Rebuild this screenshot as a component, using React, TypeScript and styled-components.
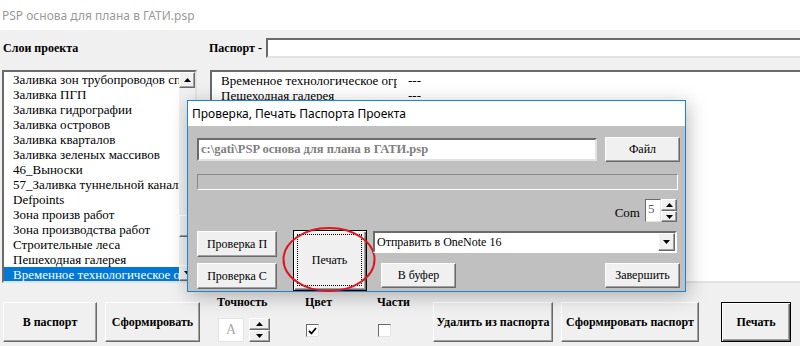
import styled, { createGlobalStyle } from "styled-components";

const GlobalStyle = createGlobalStyle`
  html, body {
    margin: 0;
    padding: 0;
    background: #f0f0f0;
  }
  * {
    box-sizing: border-box;
  }
`;

const Page = styled.div`
  position: relative;
  width: 800px;
  height: 346px;
  overflow: hidden;
  background: #f0f0f0;
  font-family: "Liberation Serif", "Times New Roman", serif;
  font-size: 13px;
  color: #000;
`;

const TitleBar = styled.div`
  height: 30px;
  background: #fff;
  display: flex;
  align-items: center;
  padding-left: 2px;
  font-family: "Noto Sans", "Open Sans", sans-serif;
  font-size: 12px;
  color: #9a9a9a;
`;

const HeaderRow = styled.div`
  margin-top: 8px;
  height: 20px;
  display: flex;
  align-items: center;
  padding-left: 3px;
  font-weight: bold;
  font-size: 12px;
`;

const LayersLabel = styled.div`
  width: 206px;
`;

const PassportLabel = styled.div`
  margin-right: 4px;
`;

const Sunken = styled.div`
  background: #fff;
  border: 2px solid;
  border-color: #6b6b6b #e3e3e3 #e3e3e3 #6b6b6b;
`;

const PassportInput = styled(Sunken)`
  flex: 1;
  height: 20px;
  margin-right: -20px;
`;

const ListsRow = styled.div`
  margin-top: 12px;
  height: 213px;
  display: flex;
  padding-left: 2px;
  gap: 13px;
`;

const LeftList = styled(Sunken)`
  width: 195px;
  display: flex;
  overflow: hidden;
`;

const Items = styled.div`
  flex: 1;
  overflow: hidden;
`;

const Item = styled.div<{ $selected?: boolean }>`
  height: 15px;
  line-height: 15px;
  padding-left: 9px;
  white-space: nowrap;
  overflow: hidden;
  background: ${(p) => (p.$selected ? "#0078d7" : "transparent")};
  color: ${(p) => (p.$selected ? "#fff" : "#000")};
`;

const ScrollBar = styled.div`
  width: 16px;
  display: flex;
  flex-direction: column;
  background: #f0f0f0;
`;

const ScrollTrack = styled.div`
  flex: 1;
  display: flex;
  flex-direction: column;
  justify-content: flex-end;
  padding-bottom: 28px;
`;

const RaisedBox = styled.div<{ $w?: number; $h: number }>`
  width: ${(p) => (p.$w ? `${p.$w}px` : "100%")};
  height: ${(p) => p.$h}px;
  display: flex;
  align-items: center;
  justify-content: center;
  background: #f0f0f0;
  border: 1px solid;
  border-color: #fff #696969 #696969 #fff;
  box-shadow: inset -1px -1px #a0a0a0;
  flex-shrink: 0;
`;

const RightList = styled(Sunken)`
  flex: 1;
  margin-right: -10px;
  padding-top: 1px;
`;

const Row = styled.div`
  display: flex;
  height: 15px;
  line-height: 15px;
`;

const Cell = styled.div<{ $w?: number; $ml: number }>`
  width: ${(p) => (p.$w ? `${p.$w}px` : "auto")};
  margin-left: ${(p) => p.$ml}px;
  white-space: nowrap;
  overflow: hidden;
`;

const Toolbar = styled.div`
  display: flex;
  align-items: flex-start;
  padding: 12px 0 0 3px;
`;

const WinButton = styled.button<{
  $w: number;
  $h: number;
  $bold?: boolean;
  $default?: boolean;
  $ml?: number;
  $mt?: number;
}>`
  position: relative;
  width: ${(p) => p.$w}px;
  height: ${(p) => p.$h}px;
  margin: ${(p) => p.$mt ?? 0}px 0 0 ${(p) => p.$ml ?? 0}px;
  padding: 0;
  flex-shrink: 0;
  white-space: nowrap;
  background: #f0f0f0;
  font-family: "Liberation Serif", "Times New Roman", serif;
  font-size: 12px;
  font-weight: ${(p) => (p.$bold ? "bold" : "normal")};
  color: #000;
  border: 1px solid;
  border-color: ${(p) =>
    p.$default ? "#000" : "#fff #696969 #696969 #fff"};
  box-shadow: ${(p) =>
    p.$default
      ? "inset 1px 1px #fff, inset -1px -1px #696969, inset -2px -2px #a0a0a0"
      : "inset -1px -1px #a0a0a0"};
`;

const FocusRing = styled.span`
  position: absolute;
  inset: 3px 4px 4px 3px;
  border: 1px dotted #000;
  display: flex;
  align-items: center;
  justify-content: center;
`;

const ToolGroup = styled.div<{ $w: number; $ml?: number }>`
  width: ${(p) => p.$w}px;
  margin-left: ${(p) => p.$ml ?? 0}px;
  display: flex;
  flex-direction: column;
  flex-shrink: 0;
`;

const GroupLabel = styled.div`
  height: 14px;
  line-height: 14px;
  font-weight: bold;
  font-size: 12px;
`;

const GroupControls = styled.div<{ $mt: number; $ml: number }>`
  display: flex;
  gap: 5px;
  margin: ${(p) => p.$mt}px 0 0 ${(p) => p.$ml}px;
`;

const LetterBox = styled(Sunken)`
  width: 26px;
  height: 24px;
  border-width: 1px;
  border-color: #e3e3e3;
  display: flex;
  align-items: center;
  justify-content: center;
  color: #a8a8a8;
  font-size: 14px;
`;

const SpinColumn = styled.div<{ $w: number; $ml?: number }>`
  width: ${(p) => p.$w}px;
  margin-left: ${(p) => p.$ml ?? 0}px;
  display: flex;
  flex-direction: column;
`;

const CheckBox = styled(Sunken)`
  width: 13px;
  height: 13px;
  border-width: 1px;
  border-color: #6b6b6b #e3e3e3 #e3e3e3 #6b6b6b;
  display: flex;
  align-items: center;
  justify-content: center;
`;

/* dialog overlay */

const Dialog = styled.div`
  position: absolute;
  left: 187px;
  top: 100px;
  width: 499px;
  height: 192px;
  border: 1px solid #1883d7;
  background: #c0c0c0;
  box-shadow: 2px 4px 18px rgba(0, 0, 0, 0.28);
  display: flex;
  flex-direction: column;
  font-size: 12px;
`;

const DialogTitle = styled.div`
  height: 25px;
  background: #fff;
  display: flex;
  align-items: center;
  padding-left: 4px;
  font-family: "Noto Sans", "Open Sans", sans-serif;
  font-size: 12px;
  color: #000;
`;

const DialogBody = styled.div`
  flex: 1;
  padding: 11px 5px 0 9px;
  display: flex;
  flex-direction: column;
`;

const PathRow = styled.div`
  display: flex;
  align-items: center;
  gap: 8px;
`;

const PathInput = styled(Sunken)`
  width: 400px;
  height: 23px;
  display: flex;
  align-items: center;
  padding-left: 2px;
  font-weight: bold;
  font-size: 12.5px;
  color: #808080;
  white-space: nowrap;
`;

const Progress = styled.div`
  margin-top: 12px;
  width: 481px;
  height: 16px;
  border: 1px solid;
  border-color: #8a8a8a #fff #fff #8a8a8a;
`;

const ComRow = styled.div`
  margin-top: 9px;
  width: 480px;
  display: flex;
  justify-content: flex-end;
  align-items: flex-end;
  gap: 5px;
`;

const ComLabel = styled.div`
  font-size: 13px;
  line-height: 16px;
  margin-bottom: 1px;
`;

const ComField = styled(Sunken)`
  width: 16px;
  height: 23px;
  border-width: 1px;
  font-size: 13px;
  color: #5a5a8a;
  padding-left: 2px;
  line-height: 18px;
`;

const ActionGrid = styled.div`
  margin-top: 8px;
  display: grid;
  grid-template-columns: 96px 80px 307px;
  grid-template-rows: 33px 28px;
`;

const GridCell = styled.div<{ $col: number; $row: string }>`
  grid-column: ${(p) => p.$col};
  grid-row: ${(p) => p.$row};
  position: relative;
`;

const Combo = styled(Sunken)`
  margin-top: 1px;
  width: 304px;
  height: 22px;
  display: flex;
  align-items: center;
  justify-content: space-between;
  padding-left: 2px;
  border-color: #6b6b6b #fff #fff #6b6b6b;
`;

const SplitRow = styled.div`
  display: flex;
  justify-content: space-between;
  padding-left: 8px;
`;

const Annotation = styled.svg`
  position: absolute;
  left: -11px;
  top: -4px;
  pointer-events: none;
`;

const Arrow = ({ down }: { down?: boolean }) => (
  <svg width="7" height="4" viewBox="0 0 7 4">
    <polygon
      points={down ? "0,0 7,0 3.5,4" : "0,4 7,4 3.5,0"}
      fill="#000"
    />
  </svg>
);

const layers = [
  "Заливка зон трубопроводов спец",
  "Заливка ПГП",
  "Заливка гидрографии",
  "Заливка островов",
  "Заливка кварталов",
  "Заливка зеленых массивов",
  "46_Выноски",
  "57_Заливка туннельной канализации",
  "Defpoints",
  "Зона произв работ",
  "Зона производства работ",
  "Строительные леса",
  "Пешеходная галерея",
  "Временное технологическое ограждение",
];

export default function App() {
  return (
    <Page>
      <GlobalStyle />
      <TitleBar>PSP основа для плана в ГАТИ.psp</TitleBar>

      <HeaderRow>
        <LayersLabel>Слои проекта</LayersLabel>
        <PassportLabel>Паспорт -</PassportLabel>
        <PassportInput />
      </HeaderRow>

      <ListsRow>
        <LeftList>
          <Items>
            {layers.map((name, i) => (
              <Item key={name} $selected={i === layers.length - 1}>
                {name}
              </Item>
            ))}
          </Items>
          <ScrollBar>
            <RaisedBox $h={16}>
              <Arrow />
            </RaisedBox>
            <ScrollTrack>
              <RaisedBox $h={22} />
            </ScrollTrack>
            <RaisedBox $h={16}>
              <Arrow down />
            </RaisedBox>
          </ScrollBar>
        </LeftList>

        <RightList>
          <Row>
            <Cell $w={176} $ml={9}>
              Временное технологическое ограждение
            </Cell>
            <Cell $ml={11}>---</Cell>
          </Row>
          <Row>
            <Cell $w={176} $ml={9}>
              Пешеходная галерея
            </Cell>
            <Cell $ml={11}>---</Cell>
          </Row>
        </RightList>
      </ListsRow>

      <Toolbar>
        <WinButton $w={94} $h={40} $mt={7} $bold>
          В паспорт
        </WinButton>
        <WinButton $w={95} $h={40} $mt={7} $ml={8} $bold>
          Сформировать
        </WinButton>

        <ToolGroup $w={88} $ml={17}>
          <GroupLabel>Точность</GroupLabel>
          <GroupControls $mt={9} $ml={1}>
            <LetterBox>A</LetterBox>
            <SpinColumn $w={21}>
              <RaisedBox $h={12}>
                <Arrow />
              </RaisedBox>
              <RaisedBox $h={12}>
                <Arrow down />
              </RaisedBox>
            </SpinColumn>
          </GroupControls>
        </ToolGroup>

        <ToolGroup $w={72}>
          <GroupLabel>Цвет</GroupLabel>
          <GroupControls $mt={15} $ml={1}>
            <CheckBox>
              <svg width="9" height="8" viewBox="0 0 9 8">
                <polyline
                  points="1,4 3.5,6.5 8,1"
                  fill="none"
                  stroke="#000"
                  strokeWidth="1.8"
                />
              </svg>
            </CheckBox>
          </GroupControls>
        </ToolGroup>

        <ToolGroup $w={56}>
          <GroupLabel>Части</GroupLabel>
          <GroupControls $mt={15} $ml={1}>
            <CheckBox />
          </GroupControls>
        </ToolGroup>

        <WinButton $w={120} $h={40} $mt={7} $bold>
          Удалить из паспорта
        </WinButton>
        <WinButton $w={138} $h={40} $mt={7} $ml={8} $bold>
          Сформировать паспорт
        </WinButton>
        <WinButton $w={70} $h={40} $mt={7} $ml={22} $bold $default>
          Печать
        </WinButton>
      </Toolbar>

      <Dialog>
        <DialogTitle>Проверка, Печать Паспорта Проекта</DialogTitle>
        <DialogBody>
          <PathRow>
            <PathInput>c:\gati\PSP основа для плана в ГАТИ.psp</PathInput>
            <WinButton $w={75} $h={25}>
              Файл
            </WinButton>
          </PathRow>

          <Progress />

          <ComRow>
            <ComLabel>Com</ComLabel>
            <ComField>5</ComField>
            <SpinColumn $w={16} $ml={-5}>
              <RaisedBox $h={12}>
                <Arrow />
              </RaisedBox>
              <RaisedBox $h={11}>
                <Arrow down />
              </RaisedBox>
            </SpinColumn>
          </ComRow>

          <ActionGrid>
            <GridCell $col={1} $row="1">
              <WinButton $w={80} $h={26} $mt={1}>
                Проверка П
              </WinButton>
            </GridCell>
            <GridCell $col={1} $row="2">
              <WinButton $w={80} $h={26}>
                Проверка С
              </WinButton>
            </GridCell>

            <GridCell $col={2} $row="1 / span 2">
              <WinButton $w={74} $h={61} $default>
                <FocusRing>Печать</FocusRing>
              </WinButton>
              <Annotation width="96" height="68" viewBox="0 0 96 68">
                <ellipse
                  cx="47"
                  cy="33.5"
                  rx="45.5"
                  ry="31.5"
                  fill="none"
                  stroke="#e0141c"
                  strokeWidth="2"
                />
              </Annotation>
            </GridCell>

            <GridCell $col={3} $row="1">
              <Combo>
                <span>Отправить в OneNote 16</span>
                <RaisedBox $w={17} $h={18}>
                  <Arrow down />
                </RaisedBox>
              </Combo>
            </GridCell>
            <GridCell $col={3} $row="2">
              <SplitRow>
                <WinButton $w={75} $h={25}>
                  В буфер
                </WinButton>
                <WinButton $w={75} $h={25}>
                  Завершить
                </WinButton>
              </SplitRow>
            </GridCell>
          </ActionGrid>
        </DialogBody>
      </Dialog>
    </Page>
  );
}
